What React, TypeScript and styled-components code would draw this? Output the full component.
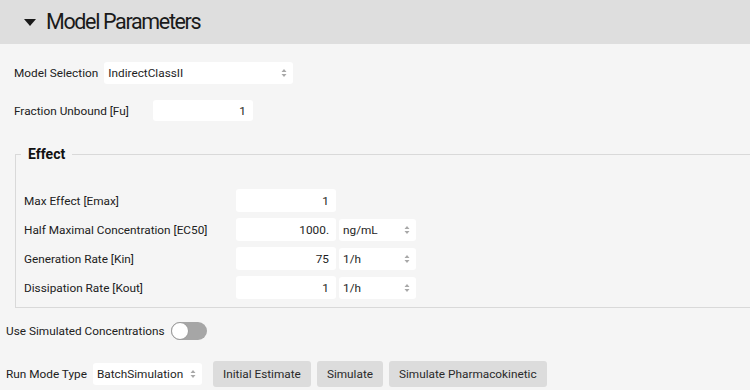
import styled, { createGlobalStyle } from "styled-components";

const GlobalStyle = createGlobalStyle`
    body{
        margin: 0;
        background: #f5f5f5;
        font-family: Roboto, "Liberation Sans", sans-serif;
        font-size: 11.8px;
        color: #212121;
    }
`;

const Header = styled.div`
    height: 44px;
    background: #dedede;
    display: flex;
    align-items: center;
    padding-left: 24px;
    gap: 10px;
    h1{
        margin: 0;
        font-size: 21.5px;
        letter-spacing: -1.35px;
        font-weight: 400;
        color: #1a1a1a;
        line-height: 44px;
    }
`;

const Row = styled.div<{ $top: number; $left?: number }>`
    display: flex;
    align-items: center;
    margin-top: ${p => p.$top}px;
    padding-left: ${p => p.$left ?? 14}px;
`;

const Label = styled.span<{ $width?: number }>`
    width: ${p => (p.$width ? `${p.$width}px` : "auto")};
    margin-right: ${p => (p.$width ? 0 : 6)}px;
    white-space: nowrap;
`;

const Field = styled.div<{ $width: number; $height?: number }>`
    width: ${p => p.$width}px;
    height: ${p => p.$height ?? 22}px;
    box-sizing: border-box;
    background: #fff;
    border-radius: 3px;
    display: flex;
    align-items: center;
    padding: 0 6px 0 4px;
    color: #1e1e1e;
`;

const NumberField = styled(Field)`
    justify-content: flex-end;
    padding-right: 7px;
`;

const SelectText = styled.span`
    flex: 1;
`;

const Fieldset = styled.fieldset`
    margin: 24px 0 0 15px;
    padding: 26px 0 8px 8px;
    border: 1px solid #d9d9d9;
    border-right: none;
    legend{
        font-size: 14px;
        font-weight: 700;
        line-height: 18px;
        padding: 0 7px;
        margin-left: -3px;
        color: #111;
    }
`;

const EffectRows = styled.div`
    display: flex;
    flex-direction: column;
    gap: 6px;
`;

const EffectRow = styled.div`
    display: flex;
    align-items: center;
    gap: 3px;
`;

const Toggle = styled.div<{ $on?: boolean }>`
    width: 36px;
    height: 18px;
    border-radius: 9px;
    background: ${p => (p.$on ? "#3f7fd0" : "#a6a6a6")};
    position: relative;
    &::after{
        content: "";
        position: absolute;
        top: 0;
        left: ${p => (p.$on ? "18px" : "0")};
        width: 16px;
        height: 16px;
        border-radius: 50%;
        background: #fff;
        border: 1px solid #9a9a9a;
    }
`;

const Button = styled.button<{ $first?: boolean }>`
    height: 26px;
    border: none;
    border-radius: 3px;
    background: #dcdcdc;
    font-family: inherit;
    font-size: 11.8px;
    color: #2a2a2a;
    padding: 0 10px;
    margin-left: ${p => (p.$first ? 11 : 6)}px;
    cursor: pointer;
`;

const Caret = () => (
    <svg width="12" height="7" viewBox="0 0 12 7">
        <path d="M0 0 H12 L6 7 Z" fill="#1a1a1a" />
    </svg>
);

const Spinner = () => (
    <svg width="6" height="10" viewBox="0 0 6 10">
        <path d="M3 1 L5.5 4 H0.5 Z M3 9 L5.5 6 H0.5 Z" fill="#a8a8a8" />
    </svg>
);

function Select({ value, width }: { value: string; width: number }) {
    return (
        <Field $width={width}>
            <SelectText>{value}</SelectText>
            <Spinner />
        </Field>
    );
}

const effects = [
    { label: "Max Effect [Emax]", value: "1" },
    { label: "Half Maximal Concentration [EC50]", value: "1000.", unit: "ng/mL" },
    { label: "Generation Rate [Kin]", value: "75", unit: "1/h" },
    { label: "Dissipation Rate [Kout]", value: "1", unit: "1/h" },
];

export default function App() {
    return (
        <>
            <GlobalStyle />
            <Header>
                <Caret />
                <h1>Model Parameters</h1>
            </Header>
            <Row $top={18}>
                <Label>Model Selection</Label>
                <Select value="IndirectClassII" width={189} />
            </Row>
            <Row $top={16}>
                <Label $width={139}>Fraction Unbound [Fu]</Label>
                <NumberField $width={100} $height={21}>1</NumberField>
            </Row>
            <Fieldset>
                <legend>Effect</legend>
                <EffectRows>
                    {effects.map(e => (
                        <EffectRow key={e.label}>
                            <Label $width={209}>{e.label}</Label>
                            <NumberField $width={100} $height={23}>{e.value}</NumberField>
                            {e.unit && <Select value={e.unit} width={77} />}
                        </EffectRow>
                    ))}
                </EffectRows>
            </Fieldset>
            <Row $top={14} $left={6}>
                <Label>Use Simulated Concentrations</Label>
                <Toggle />
            </Row>
            <Row $top={21} $left={6}>
                <Label>Run Mode Type</Label>
                <Select value="BatchSimulation" width={109} />
                <Button $first>Initial Estimate</Button>
                <Button>Simulate</Button>
                <Button>Simulate Pharmacokinetic</Button>
            </Row>
        </>
    );
}
